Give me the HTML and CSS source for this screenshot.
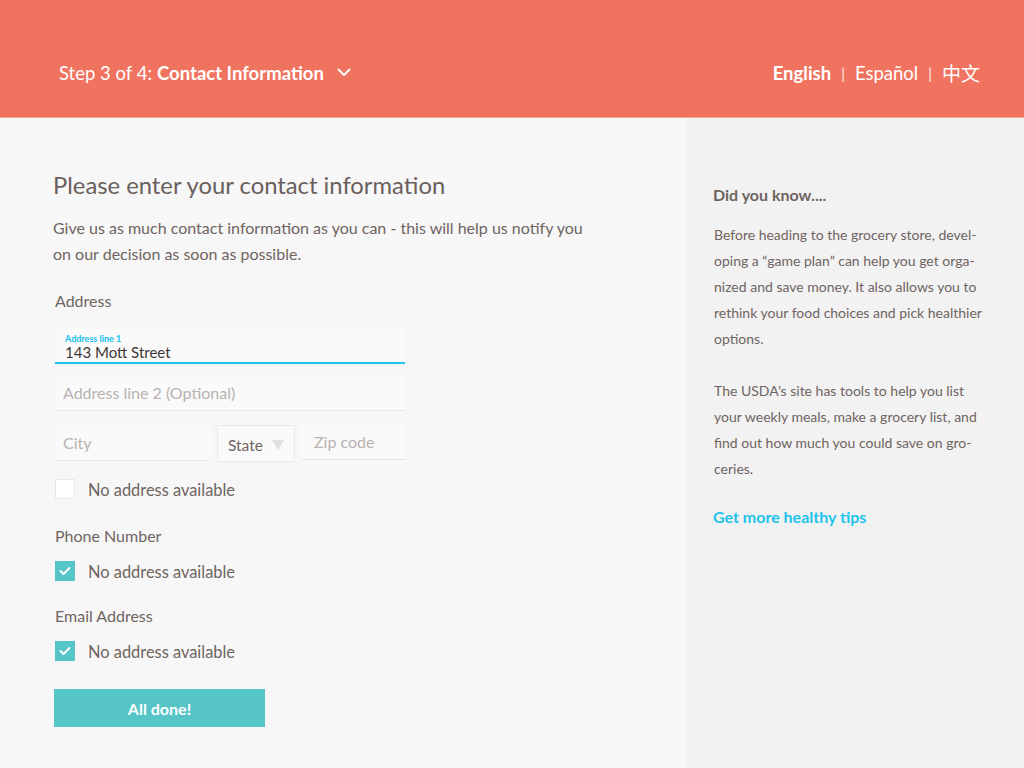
FILE: index.html
```html
<!DOCTYPE html>
<html lang="en">
<head>
<meta charset="utf-8">
<title>Contact Information</title>
<link rel="stylesheet" href="styles.css">
</head>
<body>
<header class="topbar">
  <div class="step">
    <span>Step 3 of 4: </span><strong>Contact Information</strong>
    <svg class="chev" width="14" height="9" viewBox="0 0 14 9"><path d="M1.5 1.5 L7 7 L12.5 1.5" fill="none" stroke="#fff" stroke-width="2" stroke-linecap="round" stroke-linejoin="round"/></svg>
  </div>
  <nav class="langs">
    <strong>English</strong><span class="sep">|</span><span>Español</span><span class="sep">|</span><span class="zh">中文</span>
  </nav>
</header>
<div class="content">
  <main class="main">
    <h1 class="title">Please enter your contact information</h1>
    <p class="intro">Give us as much contact information as you can - this will help us notify you on our decision as soon as possible.</p>

    <div class="label">Address</div>
    <div class="field field-active">
      <div class="float-label">Address line 1</div>
      <div class="value">143 Mott Street</div>
    </div>
    <div class="field field-2"><span class="ph">Address line 2 (Optional)</span></div>
    <div class="row">
      <div class="field city"><span class="ph">City</span></div>
      <div class="state"><span>State</span><span class="tri"></span></div>
      <div class="field zip"><span class="ph">Zip code</span></div>
    </div>
    <label class="check"><span class="box"></span><span>No address available</span></label>

    <div class="label label-gap">Phone Number</div>
    <label class="check"><span class="box on"><svg width="12" height="10" viewBox="0 0 12 10"><path d="M1.5 5 L4.5 8 L10.5 2" fill="none" stroke="#fff" stroke-width="2" stroke-linecap="round" stroke-linejoin="round"/></svg></span><span>No address available</span></label>

    <div class="label label-gap label-email">Email Address</div>
    <label class="check"><span class="box on"><svg width="12" height="10" viewBox="0 0 12 10"><path d="M1.5 5 L4.5 8 L10.5 2" fill="none" stroke="#fff" stroke-width="2" stroke-linecap="round" stroke-linejoin="round"/></svg></span><span>No address available</span></label>

    <button class="done">All done!</button>
  </main>
  <aside class="side">
    <h2 class="side-title">Did you know....</h2>
    <p class="side-text">Before heading to the grocery store, devel-<br>oping a “game plan” can help you get orga-<br>nized and save money. It also allows you to<br>rethink your food choices and pick healthier<br>options.</p>
    <p class="side-text">The USDA’s site has tools to help you list<br>your weekly meals, make a grocery list, and<br>find out how much you could save on gro-<br>ceries.</p>
    <a class="tips" href="#">Get more healthy tips</a>
  </aside>
</div>
</body>
</html>
```

FILE: styles.css
```css
* { box-sizing: border-box; }
html, body { margin: 0; padding: 0; }
body {
  font-family: Lato, "Noto Sans CJK SC", sans-serif;
  color: #6f6461;
  background: #f7f7f7;
  width: 1024px;
  height: 768px;
  overflow: hidden;
}
.topbar {
  height: 118px;
  background: #f07360;
  display: flex;
  align-items: center;
  justify-content: space-between;
  padding: 28px 44px 0 59px;
  color: #fff;
  border-bottom: 1px solid #f6a397;
}
.step { font-size: 18.5px; display: flex; align-items: center; }
.step strong { font-weight: 700; margin-left: 5px; }
.chev { margin-left: 13px; }
.langs { font-size: 18.5px; display: flex; align-items: center; }
.langs strong { font-weight: 700; }
.sep { margin: 0 10px; font-size: 15px; opacity: 0.9; }
.zh { font-family: "Noto Sans CJK SC", sans-serif; font-size: 19px; }

.content { display: flex; height: 650px; }
.main { width: 686px; padding: 52px 0 0 53px; }
.side { flex: 1; background: #f2f2f2; padding: 67px 30px 0 27px; }

.title { font-size: 23.8px; font-weight: 400; margin: 0; line-height: 30px; color: #6a5f5c; }
.intro { font-size: 16px; line-height: 26px; margin: 15px 0 0; width: 540px; }

.label { font-size: 16px; line-height: 20px; margin: 24px 0 0 2px; }
.label-gap { margin-top: 27px; }
.label-email { margin-top: 25px; }

.field {
  background: #fafafa;
  border-bottom: 1px solid #e6e6e6;
  height: 36px;
  display: flex;
  align-items: center;
  padding-left: 8px;
}
.ph { font-size: 16px; color: #b7b2b0; }
.field.field-active {
  margin: 17px 0 0 2px;
  width: 350px;
  border-bottom: 2px solid #1ec3ec;
  flex-direction: column;
  align-items: flex-start;
  justify-content: center;
  padding-left: 10px;
}
.float-label { font-size: 9px; color: #14c0ee; line-height: 10px; margin-top: 4px; font-weight: 700; }
.value { font-size: 15px; color: #3d3634; line-height: 17px; }
.field-2 { margin: 11px 0 0 2px; width: 350px; }
.row { display: flex; margin: 14px 0 0 2px; gap: 7px; align-items: flex-start; }
.city { width: 155px; }
.state {
  width: 78px;
  height: 37px;
  background: #fafafa;
  border: 1px solid #e9e9e9;
  display: flex;
  align-items: center;
  justify-content: space-between;
  padding: 2px 10px 0 10px;
  font-size: 15.5px;
  color: #6f6461;
}
.tri {
  width: 0; height: 0;
  border-left: 6px solid transparent;
  border-right: 6px solid transparent;
  border-top: 10px solid #e1e1e1;
}
.zip { width: 104px; margin-top: -1px; padding-left: 12px; }

.check { display: flex; align-items: center; font-size: 16.4px; margin: 17px 0 0 2px; }
.box {
  width: 20px; height: 20px;
  background: #fff;
  border: 1px solid #e9e9e9;
  margin-right: 13px;
  display: flex; align-items: center; justify-content: center;
}
.box.on { background: #55c5c7; border-color: #55c5c7; }
.label-gap + .check { margin-top: 15px; }

.done {
  display: block;
  margin: 28px 0 0 1px;
  width: 211px;
  height: 38px;
  border: 0;
  background: #55c5c7;
  color: #fff;
  font-family: Lato, sans-serif;
  font-size: 16px;
  font-weight: 700;
}

.side-title { font-size: 16px; font-weight: 700; margin: 0; line-height: 20px; }
.side-text { font-size: 14px; line-height: 26px; margin: 17px 0 0 1px; }
.side-text + .side-text { margin-top: 26px; }
.tips { display: block; margin-top: 25px; font-size: 16px; font-weight: 700; color: #1ec3ec; text-decoration: none; }
```
